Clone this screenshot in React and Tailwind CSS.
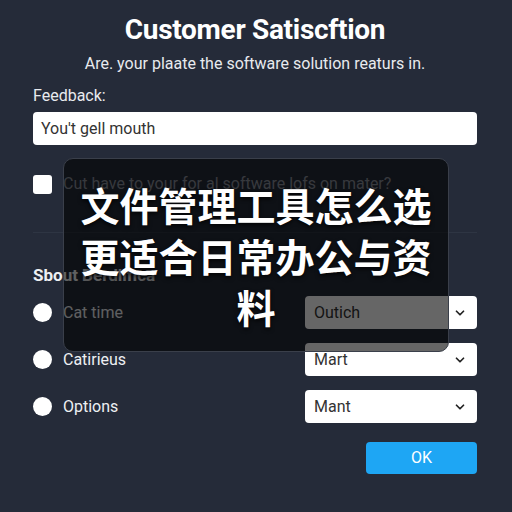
import { ChevronDown } from "lucide-react";

const rows = [
  { label: "Cat time", value: "Outich" },
  { label: "Catirieus", value: "Mart" },
  { label: "Options", value: "Mant" },
];

function Select({ value }) {
  return (
    <div className="flex h-[33px] w-[172px] items-center justify-between rounded-[4px] bg-white pl-[9px] pr-[10px] text-[16px] text-[#333]">
      <span>{value}</span>
      <ChevronDown className="h-[14px] w-[14px] text-[#222]" strokeWidth={3} />
    </div>
  );
}

export default function App() {
  return (
    <div className="relative h-[512px] w-[512px] overflow-hidden bg-[#252b39] font-['Roboto',sans-serif] text-white">
      <div className="pl-[33px] pr-[35px] pt-[14px]">
        <h1 className="text-center text-[28px] font-bold leading-[32px] tracking-[-0.3px]">
          Customer Satiscftion
        </h1>
        <p className="mt-[8px] text-center text-[16px] leading-[20px] text-[#e8eaee]">
          Are. your plaate the software solution reaturs in.
        </p>

        <label className="mt-[12px] block text-[16px] leading-[20px] text-[#e8eaee]">
          Feedback:
        </label>
        <div className="mt-[6px] flex h-[33px] items-center rounded-[4px] bg-white px-[8px] text-[16px] text-[#333]">
          You't gell mouth
        </div>

        {/* checkbox question */}
        <div className="mt-[29px] flex h-[20px] items-center gap-[11px]">
          <div className="h-[19px] w-[19px] rounded-[3px] bg-white" />
          <span className="text-[16px] text-[#8a8f99]">
            Cut have to your for al software lofs on mater?
          </span>
        </div>

        <div className="mt-[38px] h-px bg-[#2e3543]" />

        <h2 className="mt-[32px] text-[17px] font-bold leading-[20px] text-[#eef0f3]">
          Sbout Berdlifica
        </h2>

        <div className="mt-[11px] flex flex-col gap-[14px]">
          {rows.map((row) => (
            <div key={row.label} className="flex items-center justify-between">
              <div className="flex items-center gap-[11px]">
                <div className="h-[19px] w-[19px] rounded-full bg-white" />
                <span className="text-[16px] text-[#eef0f3]">{row.label}</span>
              </div>
              <Select value={row.value} />
            </div>
          ))}
        </div>

        <div className="mt-[19px] flex justify-end">
          <button className="h-[32px] w-[111px] rounded-[4px] bg-[#1ea6f4] text-[16px] text-white">
            OK
          </button>
        </div>
      </div>

      {/* caption overlay */}
      <div className="absolute left-[63px] top-[158px] flex h-[194px] w-[386px] items-center justify-center rounded-[10px] border border-[#3a3f4a] bg-black/60 px-[14px]">
        <p className="text-center font-['Noto_Sans_CJK_SC',sans-serif] text-[39px] font-bold leading-[51px] text-white [text-shadow:0_2px_4px_rgba(0,0,0,0.8)]">
          文件管理工具怎么选更适合日常办公与资料
        </p>
      </div>
    </div>
  );
}
